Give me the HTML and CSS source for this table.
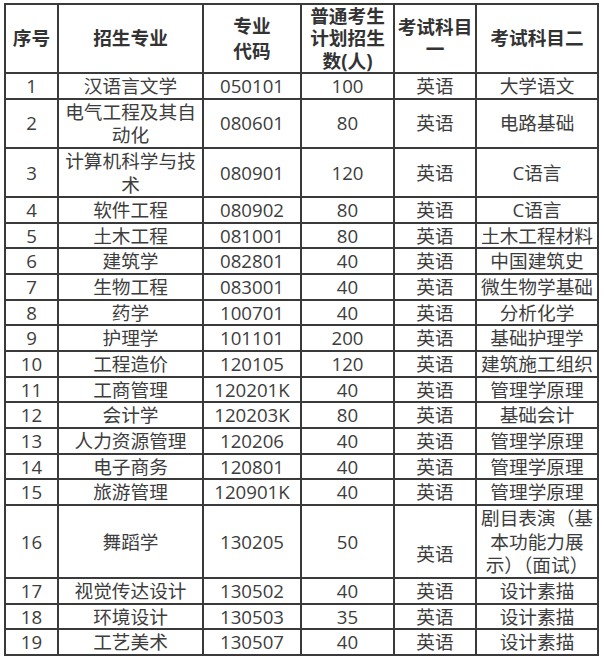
FILE: index.html
```html
<!DOCTYPE html>
<html lang="zh">
<head>
<meta charset="utf-8">
<title>招生专业</title>
<link rel="stylesheet" href="styles.css">
</head>
<body>
<table class="plan">
  <colgroup>
    <col class="c1"><col class="c2"><col class="c3"><col class="c4"><col class="c5"><col class="c6">
  </colgroup>
  <thead>
    <tr>
      <th>序号</th>
      <th>招生专业</th>
      <th class="two-line">专业<br>代码</th>
      <th>普通考生计划招生数(人)</th>
      <th>考试科目一</th>
      <th>考试科目二</th>
    </tr>
  </thead>
  <tbody>
    <tr><td>1</td><td>汉语言文学</td><td>050101</td><td>100</td><td>英语</td><td>大学语文</td></tr>
    <tr><td>2</td><td>电气工程及其自动化</td><td>080601</td><td>80</td><td>英语</td><td>电路基础</td></tr>
    <tr><td>3</td><td>计算机科学与技术</td><td>080901</td><td>120</td><td>英语</td><td>C语言</td></tr>
    <tr><td>4</td><td>软件工程</td><td>080902</td><td>80</td><td>英语</td><td>C语言</td></tr>
    <tr><td>5</td><td>土木工程</td><td>081001</td><td>80</td><td>英语</td><td>土木工程材料</td></tr>
    <tr><td>6</td><td>建筑学</td><td>082801</td><td>40</td><td>英语</td><td>中国建筑史</td></tr>
    <tr><td>7</td><td>生物工程</td><td>083001</td><td>40</td><td>英语</td><td>微生物学基础</td></tr>
    <tr><td>8</td><td>药学</td><td>100701</td><td>40</td><td>英语</td><td>分析化学</td></tr>
    <tr><td>9</td><td>护理学</td><td>101101</td><td>200</td><td>英语</td><td>基础护理学</td></tr>
    <tr><td>10</td><td>工程造价</td><td>120105</td><td>120</td><td>英语</td><td>建筑施工组织</td></tr>
    <tr><td>11</td><td>工商管理</td><td>120201K</td><td>40</td><td>英语</td><td>管理学原理</td></tr>
    <tr><td>12</td><td>会计学</td><td>120203K</td><td>80</td><td>英语</td><td>基础会计</td></tr>
    <tr><td>13</td><td>人力资源管理</td><td>120206</td><td>40</td><td>英语</td><td>管理学原理</td></tr>
    <tr><td>14</td><td>电子商务</td><td>120801</td><td>40</td><td>英语</td><td>管理学原理</td></tr>
    <tr><td>15</td><td>旅游管理</td><td>120901K</td><td>40</td><td>英语</td><td>管理学原理</td></tr>
    <tr><td>16</td><td>舞蹈学</td><td>130205</td><td>50</td><td><br>英语</td><td>剧目表演（基本功能力展示）（面试）</td></tr>
    <tr><td>17</td><td>视觉传达设计</td><td>130502</td><td>40</td><td>英语</td><td>设计素描</td></tr>
    <tr><td>18</td><td>环境设计</td><td>130503</td><td>35</td><td>英语</td><td>设计素描</td></tr>
    <tr><td>19</td><td>工艺美术</td><td>130507</td><td>40</td><td>英语</td><td>设计素描</td></tr>
  </tbody>
</table>
</body>
</html>
```
FILE: styles.css
```css
html, body {
  margin: 0;
  padding: 0;
  background: #ffffff;
}
body {
  padding: 3px 0 0 4px;
  font-family: "Open Sans", "Noto Sans CJK SC", sans-serif;
  font-size: 18.67px;
  color: #3d3d3d;
}
.plan {
  table-layout: fixed;
  width: 595px;
  border-collapse: separate;
  border-spacing: 0;
  border: 1px solid #3a3a3a;
}
.c1 { width: 53px; }
.c2 { width: 145px; }
.c3 { width: 98px; }
.c4 { width: 93px; }
.c5 { width: 82px; }
.c6 { width: 122px; }
.plan th,
.plan td {
  border: 1px solid #3a3a3a;
  padding: 0;
  text-align: center;
  vertical-align: middle;
}
.plan td {
  line-height: 23.65px;
}
.plan th {
  font-weight: bold;
  color: #333333;
  line-height: 22.3px;
}
.plan th.two-line {
  line-height: 25px;
}
```
